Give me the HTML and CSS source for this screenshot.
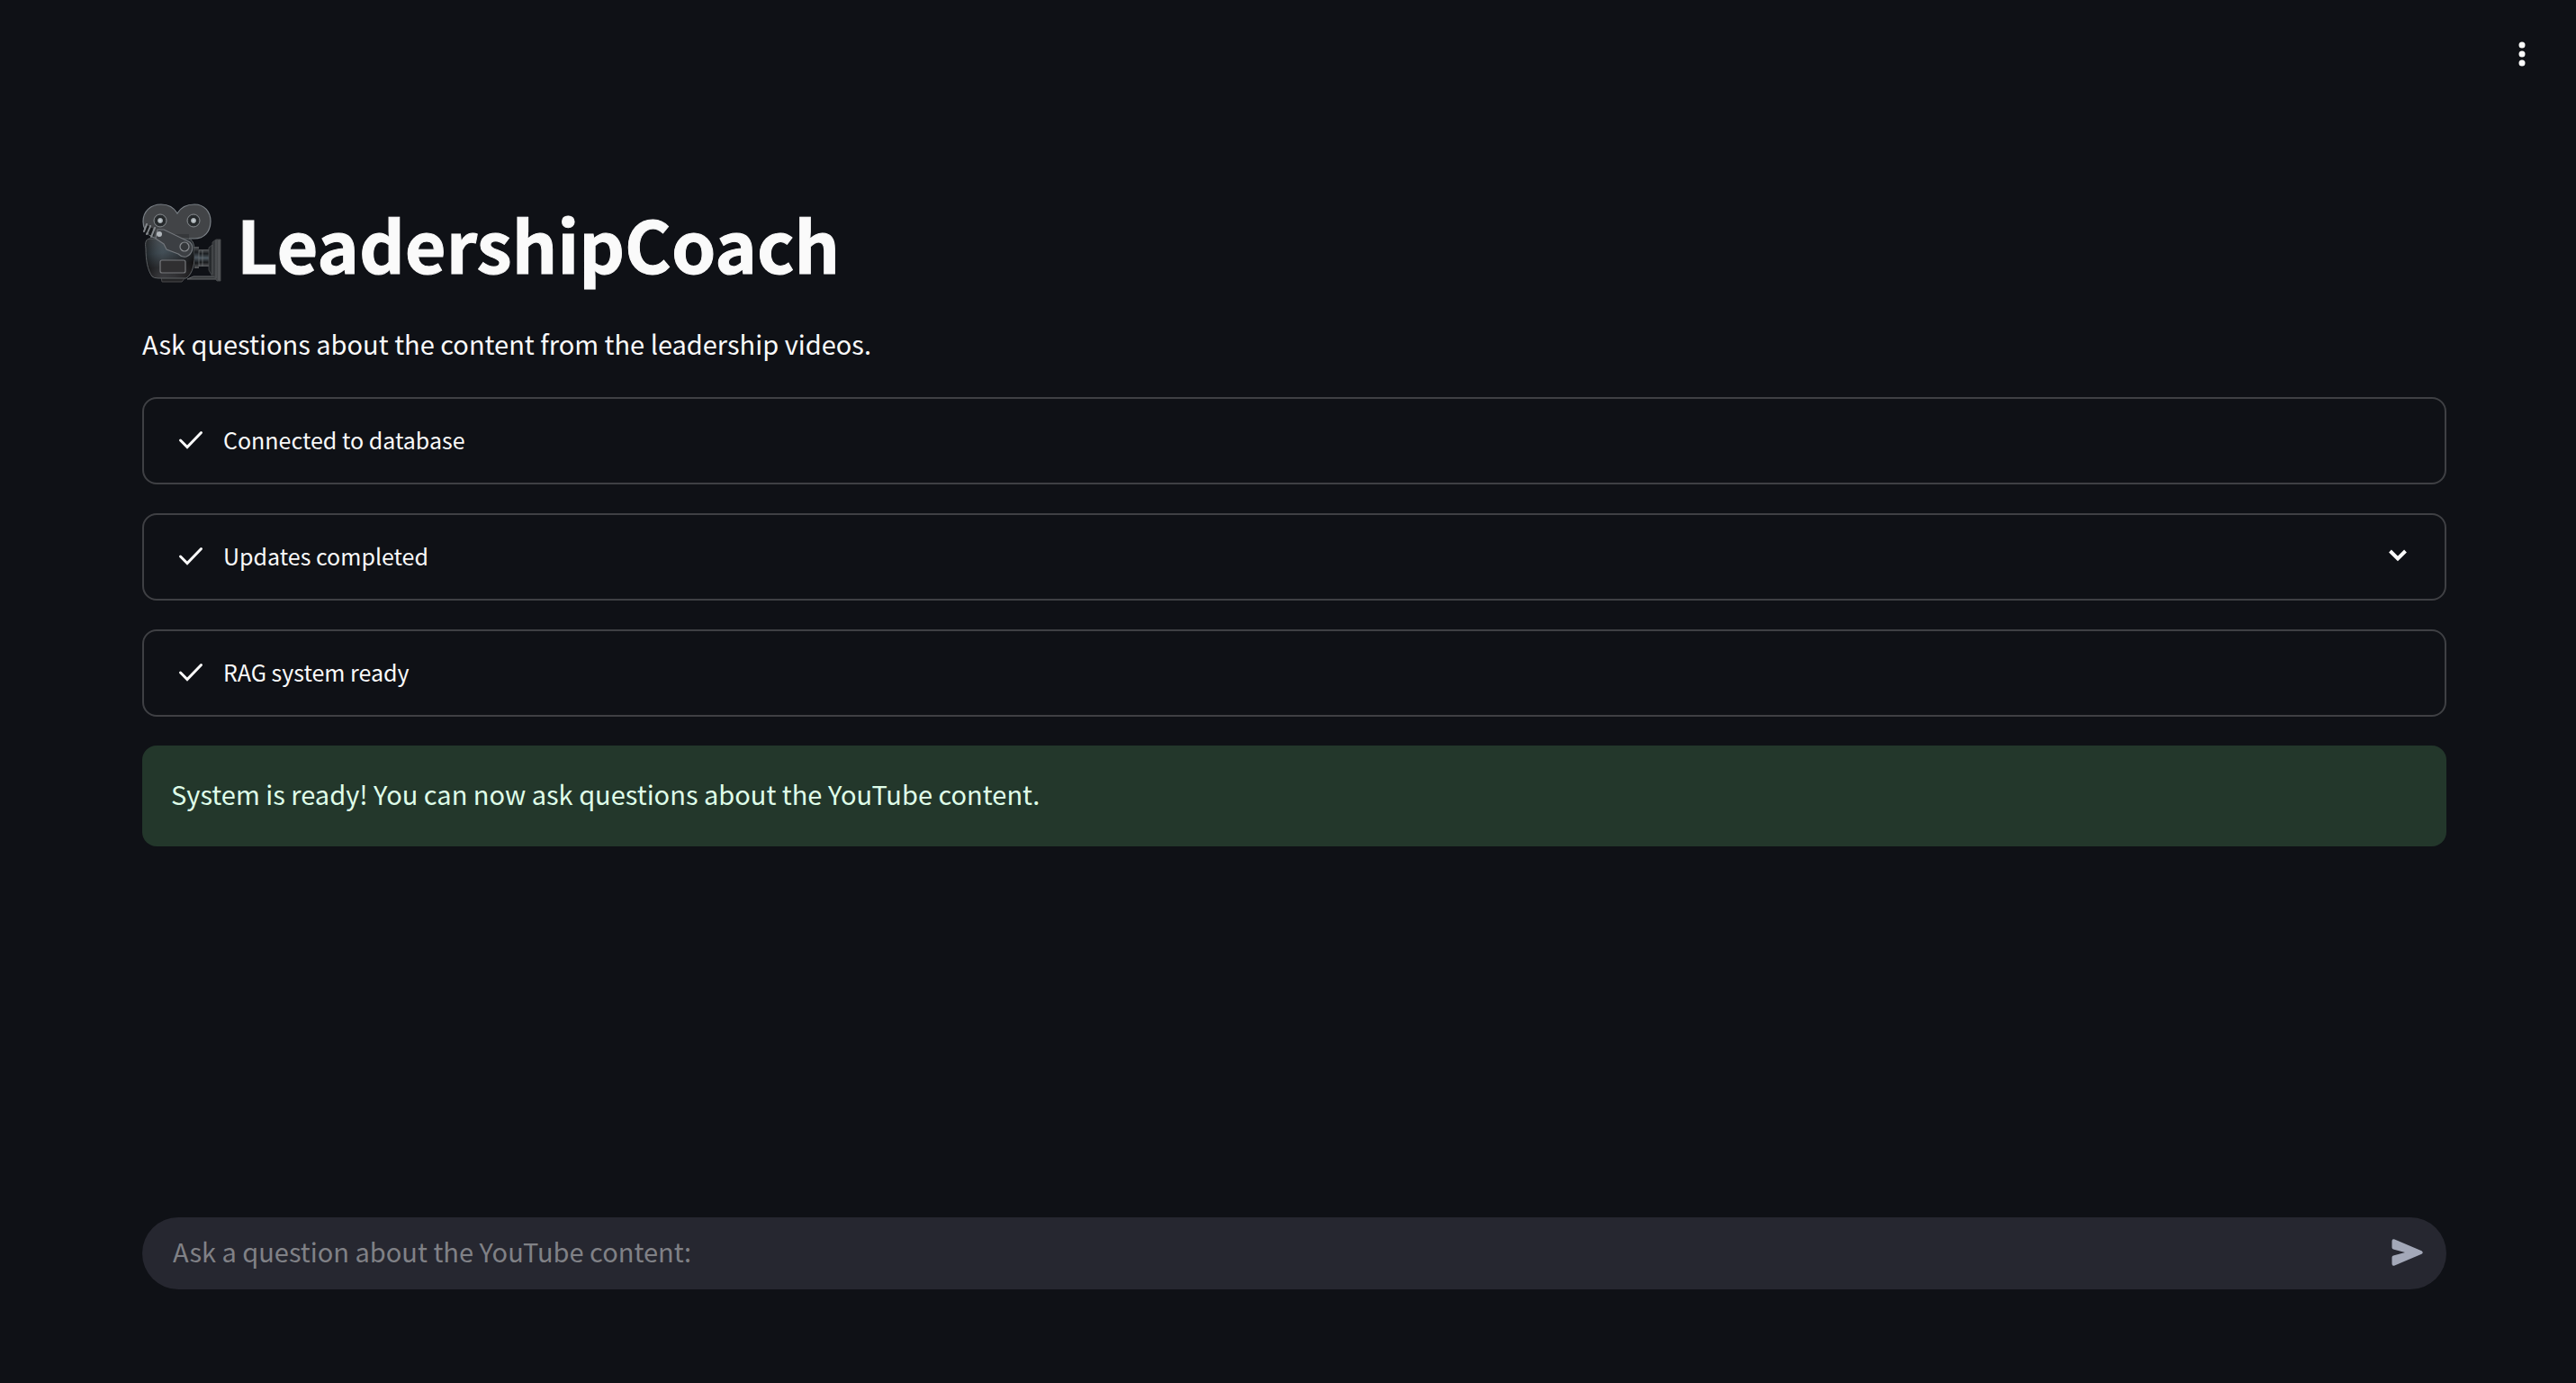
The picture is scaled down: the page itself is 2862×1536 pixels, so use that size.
FILE: index.html
```html
<!DOCTYPE html>
<html lang="en">
<head>
  <meta charset="utf-8">
  <meta name="viewport" content="width=device-width, initial-scale=1">
  <title>LeadershipCoach</title>
  <link rel="stylesheet" href="styles.css">
</head>
<body>
  <header class="toolbar">
    <button class="icon-button" type="button" aria-label="Main menu">
      <svg class="icon-menu" viewBox="0 0 40 40" aria-hidden="true" fill="currentColor">
        <circle cx="20" cy="10" r="3.5"/><circle cx="20" cy="20" r="3.5"/><circle cx="20" cy="30" r="3.5"/>
      </svg>
    </button>
  </header>

  <main class="content">
    <h1 class="title">
      <svg class="camera" viewBox="0 0 88 88" aria-hidden="true">
        <defs>
          <linearGradient id="body" x1="0" y1="0" x2="0.2" y2="1">
            <stop offset="0" stop-color="#4a4d51"/><stop offset="0.4" stop-color="#3c4850"/><stop offset="0.75" stop-color="#211f21"/><stop offset="1" stop-color="#302c2e"/>
          </linearGradient>
          <linearGradient id="sheen" x1="0" y1="0" x2="1" y2="0">
            <stop offset="0" stop-color="#000" stop-opacity="0.5"/><stop offset="0.35" stop-color="#56626a" stop-opacity="0.25"/><stop offset="1" stop-color="#000" stop-opacity="0.5"/>
          </linearGradient>
          <linearGradient id="barrel" x1="0" y1="0" x2="0" y2="1">
            <stop offset="0" stop-color="#55585b"/><stop offset="0.25" stop-color="#1a1d20"/><stop offset="0.5" stop-color="#4d5860"/><stop offset="0.75" stop-color="#17191b"/><stop offset="1" stop-color="#5c5d60"/>
          </linearGradient>
          <linearGradient id="hood" x1="0" y1="0" x2="1" y2="0">
            <stop offset="0" stop-color="#202326"/><stop offset="1" stop-color="#505255"/>
          </linearGradient>
          <radialGradient id="hub">
            <stop offset="0" stop-color="#d5dce1"/><stop offset="0.35" stop-color="#a0a7ab"/><stop offset="0.5" stop-color="#222527"/><stop offset="1" stop-color="#303437"/>
          </radialGradient>
        </defs>
        <path d="M57 81H84V84H50Z" fill="#35383b" stroke="#66686b"/>
        <path d="M21 82H48L44 87H22Z" fill="#242426" stroke="#48484b"/>
        <path d="M39 11C35 4 29 1 21 1C9 1 1 9 1 20C1 31 9 39 20 39L53 39H58C69 39 76 31 76 20C76 9 69 1 58 1C49 1 43 4 39 11Z" fill="#424447" stroke="#7b8187" stroke-width="1.2"/>
        <path d="M30 34H52V45H30Z" fill="#36383b"/>
        <path d="M8 39C4 40 3 43 4 50C4 63 6 74 11 81Q13 83 18 83H49C56 78 59 66 58 53C58 45 56 39 50 39Z" fill="url(#body)"/>
        <path d="M8 39C4 40 3 43 4 50C4 63 6 74 11 81Q13 83 18 83H49C56 78 59 66 58 53C58 45 56 39 50 39Z" fill="url(#sheen)" stroke="#5c6063"/>
        <g stroke="#85898d">
          <circle cx="20" cy="19" r="7" fill="url(#hub)"/><circle cx="57" cy="19" r="7" fill="url(#hub)"/>
        </g>
        <path d="M17 29L24 29L53 43C58 48 56 56 49 59C45 60 42 58 40 56L27 51L24 45L15 39Z" fill="#3c3f43" stroke="#73777c" stroke-width="1.1"/>
        <circle cx="47" cy="48" r="5" fill="#34373a" stroke="#8a8d91" stroke-width="1.2"/>
        <path d="M3 24L14 30L13 37L3 31Z" fill="#222528"/>
        <path d="M5 23L2 31M9 25L5 34M14 27L10 37" fill="none" stroke="#85898d" stroke-width="2" stroke-linecap="round"/>
        <path d="M7 25L4 32M11 27L8 35" stroke="#17191b" stroke-width="2"/>
        <circle cx="19" cy="34" r="3" fill="#b2b7bc"/>
        <rect x="20" y="63" width="28" height="14" rx="2" fill="#302f31" stroke="#77797c" stroke-width="1.2"/>
        <path d="M58 48H63V72H58Z" fill="url(#barrel)"/>
        <path d="M63 51H75V70H63Z" fill="url(#barrel)"/>
        <path d="M63 52V70M67 52V70" stroke="#6b6f72" stroke-width="0.8"/>
        <path d="M74 49L78 46V43L82 40H87V86H83L80 81H78L74 74Z" fill="url(#hood)" stroke="#4c4f52" stroke-width="0.8"/>
        <path d="M78 46V79M82 41V83M85 41V85" stroke="#5f6265" stroke-width="0.8"/>
      </svg>
      <span>LeadershipCoach</span>
    </h1>
    <p class="intro">Ask questions about the content from the leadership videos.</p>

    <section class="statuses" aria-label="System status">
      <div class="status">
        <svg class="icon-check" viewBox="0 0 32 32" aria-hidden="true"><path d="M4.5 17L12 24.5L27.5 8.5"/></svg>
        <span>Connected to database</span>
      </div>
      <button class="status" type="button" aria-expanded="false">
        <svg class="icon-check" viewBox="0 0 32 32" aria-hidden="true"><path d="M4.5 17L12 24.5L27.5 8.5"/></svg>
        <span>Updates completed</span>
        <svg class="icon-chevron" viewBox="0 0 32 32" aria-hidden="true"><path d="M7.500 11L16 19.500L24.500 11"/></svg>
      </button>
      <div class="status">
        <svg class="icon-check" viewBox="0 0 32 32" aria-hidden="true"><path d="M4.5 17L12 24.5L27.5 8.5"/></svg>
        <span>RAG system ready</span>
      </div>
      <p class="success" role="status">System is ready! You can now ask questions about the YouTube content.</p>
    </section>
  </main>

  <footer class="chat">
    <form class="chat-form">
      <input class="chat-input" type="text" aria-label="Question" placeholder="Ask a question about the YouTube content:">
      <button class="icon-button send" type="submit" aria-label="Send">
        <svg class="icon-send" viewBox="0 0 40 40" aria-hidden="true"><path d="M3.500 7.500V14.500Q3.500 16 5 16.500L18 20L5 23.500Q3.500 24 3.500 25.500V32.500Q3.500 35.500 6.500 34.500L36.500 21.800Q39 20 36.500 18.200L6.500 5.500Q3.500 4.500 3.500 7.500Z" fill="currentColor"/></svg>
      </button>
    </form>
  </footer>
</body>
</html>
```
FILE: styles.css
```css
* {
  box-sizing: border-box;
}

body {
  display: flex;
  flex-direction: column;
  min-height: 100vh;
  margin: 0;
  background: #0f1116;
  color: #fafafa;
  font-family: "Noto Sans CJK SC", "Noto Sans", sans-serif;
  font-size: 29px;
  line-height: 48px;
}

.toolbar {
  display: flex;
  justify-content: flex-end;
  height: 120px;
  padding: 40px 40px 0;
}

.icon-button {
  display: flex;
  width: 40px;
  height: 40px;
  padding: 0;
  border: 0;
  background: none;
  color: inherit;
}

.icon-menu {
  width: 40px;
  height: 40px;
}

.content {
  flex: 1;
  padding: 94px 144px 0 158px;
}

.title {
  display: flex;
  align-items: center;
  gap: 17px;
  margin: 0;
  font-size: 79px;
  font-weight: 700;
  line-height: 112px;
  -webkit-text-stroke: 1px currentColor;
}

.camera {
  width: 88px;
  height: 88px;
}

.intro {
  margin: 31px 0 36px;
}

.statuses {
  display: flex;
  flex-direction: column;
  gap: 32px;
}

.status {
  display: flex;
  align-items: center;
  gap: 20px;
  width: 100%;
  min-height: 97px;
  padding: 0 36px 4px;
  border: 2px solid #3f4044;
  border-radius: 16px;
  background: none;
  color: inherit;
  font: inherit;
  font-size: 25px;
  text-align: left;
}

.icon-check,
.icon-chevron {
  width: 32px;
  height: 32px;
  fill: none;
  stroke: currentColor;
  stroke-width: 3;
}

.icon-check {
  stroke-linecap: round;
}

.icon-chevron {
  margin-left: auto;
  stroke-width: 4;
}

.success {
  margin: 0;
  padding: 29px 32px 35px;
  border-radius: 16px;
  background: #23372b;
  color: #dffde9;
}

.chat {
  padding: 0 144px 104px 158px;
}

.chat-form {
  display: flex;
  align-items: center;
  height: 80px;
  padding: 0 24px 2px 34px;
  border-radius: 40px;
  background: #262730;
}

.chat-input {
  flex: 1;
  min-width: 0;
  height: 48px;
  padding: 0 0 4px;
  border: 0;
  outline: 0;
  background: none;
  color: inherit;
  font: inherit;
}

.chat-input::placeholder {
  color: #808186;
  opacity: 1;
}

.send {
  color: #a3a8b8;
}

.icon-send {
  width: 40px;
  height: 40px;
}
```
